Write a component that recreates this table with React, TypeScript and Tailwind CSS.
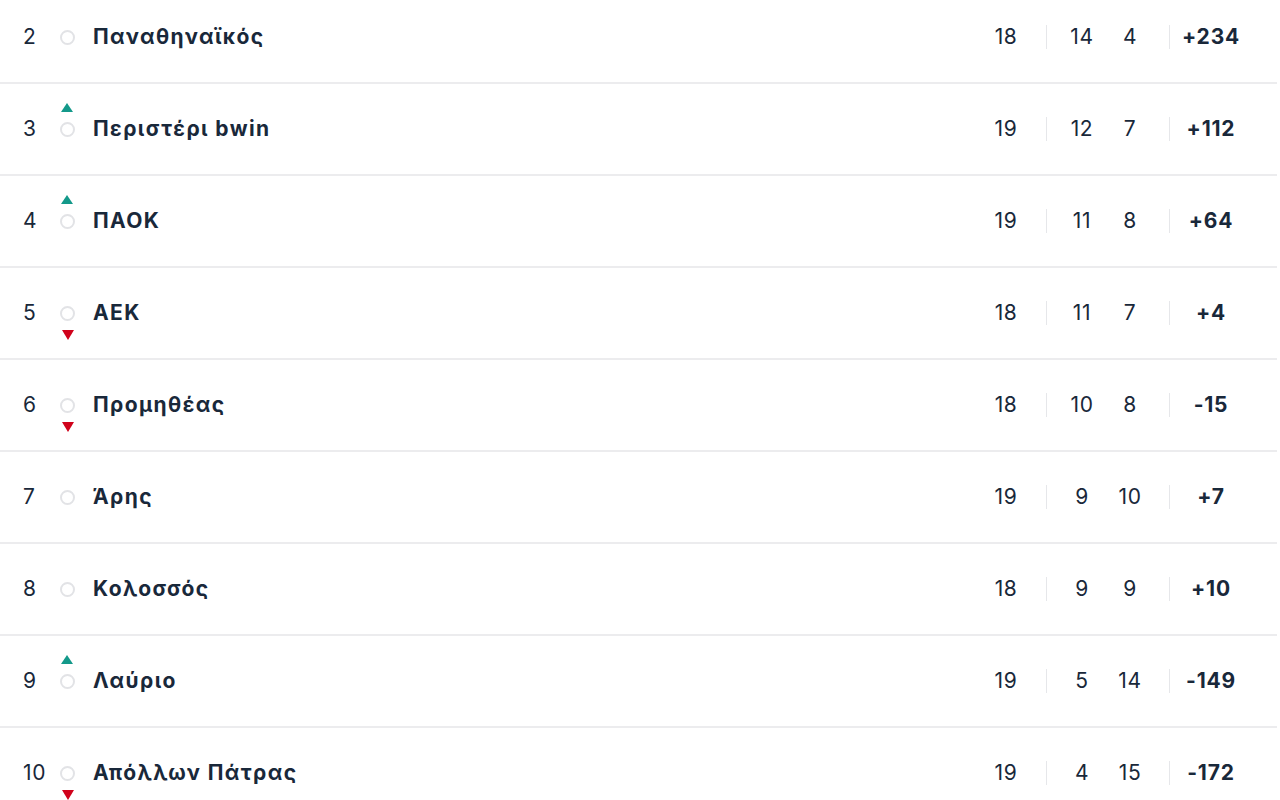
const rows = [
  { pos: 2, team: "Παναθηναϊκός", played: 18, won: 14, lost: 4, diff: "+234", move: "" },
  { pos: 3, team: "Περιστέρι bwin", played: 19, won: 12, lost: 7, diff: "+112", move: "up" },
  { pos: 4, team: "ΠΑΟΚ", played: 19, won: 11, lost: 8, diff: "+64", move: "up" },
  { pos: 5, team: "ΑΕΚ", played: 18, won: 11, lost: 7, diff: "+4", move: "down" },
  { pos: 6, team: "Προμηθέας", played: 18, won: 10, lost: 8, diff: "-15", move: "down" },
  { pos: 7, team: "Άρης", played: 19, won: 9, lost: 10, diff: "+7", move: "" },
  { pos: 8, team: "Κολοσσός", played: 18, won: 9, lost: 9, diff: "+10", move: "" },
  { pos: 9, team: "Λαύριο", played: 19, won: 5, lost: 14, diff: "-149", move: "up" },
  { pos: 10, team: "Απόλλων Πάτρας", played: 19, won: 4, lost: 15, diff: "-172", move: "down" },
];

const Marker = ({ move }: { move: string }) => {
  return (
    <div className="relative flex h-[15px] w-[15px] items-center justify-center">
      <div className="h-[15px] w-[15px] rounded-full border-2 border-[#e2e3e6]" />
      {move === "up" && (
        <div className="absolute left-[1px] top-[-19px] h-0 w-0 border-x-[6.5px] border-b-[9px] border-x-transparent border-b-[#14998a]" />
      )}
      {move === "down" && (
        <div className="absolute left-[1.5px] top-[24px] h-0 w-0 border-x-[6px] border-t-[10px] border-x-transparent border-t-[#d0021b]" />
      )}
    </div>
  );
};

export default function App() {
  return (
    <div
      className="h-[800px] w-[1280px] overflow-hidden bg-white text-[#19283a]"
      style={{ fontFamily: "Inter, 'Noto Sans', sans-serif" }}
    >
      <div className="-mt-[8px] w-[1277px]">
        {rows.map((r) => (
          <div
            key={r.pos}
            className="flex h-[92px] items-center border-b-2 border-[#ececee] text-[21px] tracking-[0.6px]"
          >
            <div className="w-[60px] pl-[23px]">{r.pos}</div>
            <Marker move={r.move} />
            <div className="ml-[18px] flex-1 font-bold tracking-[1.4px]">
              {r.team}
            </div>
            <div className="w-[80px] text-center">{r.played}</div>
            <div className="h-[24px] w-px bg-[#e6e7ea]" />
            <div className="ml-[11px] w-[48px] text-center">{r.won}</div>
            <div className="w-[48px] text-center">{r.lost}</div>
            <div className="ml-[15px] h-[24px] w-px bg-[#e6e7ea]" />
            <div className="w-[82px] text-center font-bold tracking-[0.8px]">{r.diff}</div>
            <div className="w-[25px]" />
          </div>
        ))}
      </div>
    </div>
  );
}
